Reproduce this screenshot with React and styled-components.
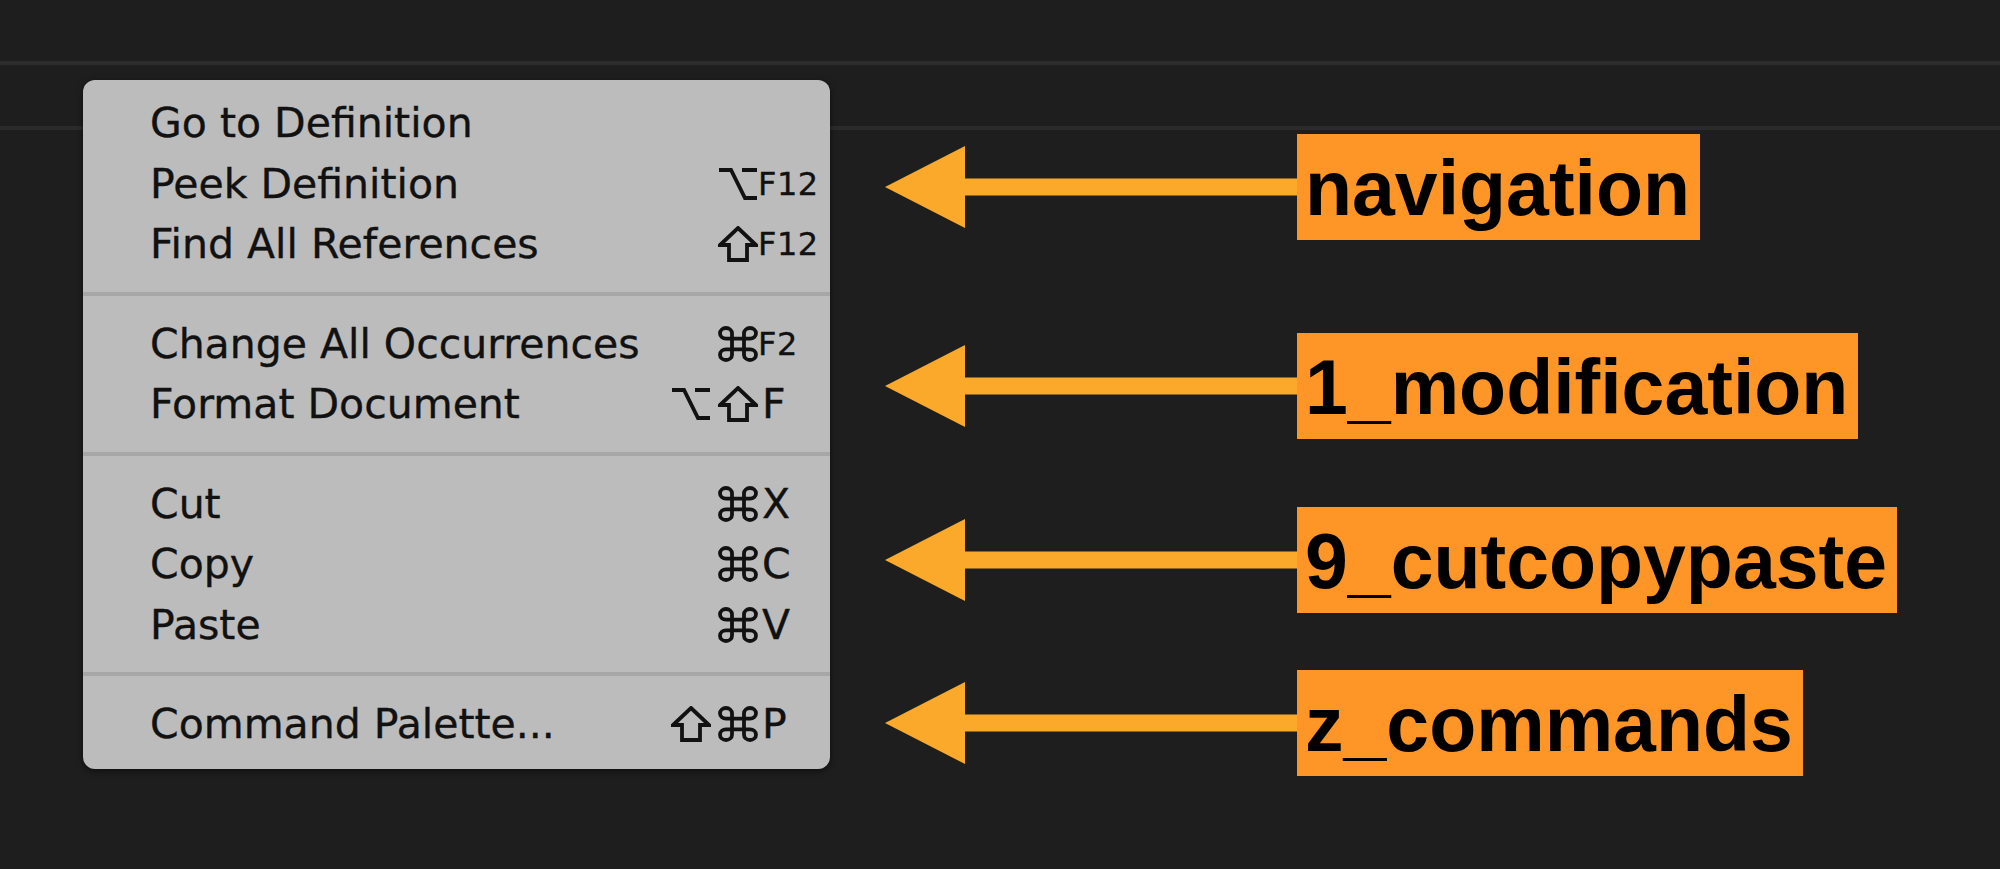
import React from 'react';
import styled, { createGlobalStyle } from 'styled-components';

const GlobalStyle = createGlobalStyle`
  html, body {
    margin: 0;
    padding: 0;
    background: #1e1e1e;
  }
  * {
    box-sizing: border-box;
  }
`;

const Screen = styled.div`
  position: relative;
  width: 2000px;
  height: 869px;
  overflow: hidden;
  background: #1e1e1e;
`;

const TitleBar = styled.div`
  height: 65px;
  border-bottom: 4px solid #2c2c2c;
`;

const TabBar = styled.div`
  height: 65px;
  border-bottom: 4px solid #2b2b2b;
`;

const Overlay = styled.div`
  position: absolute;
  top: 80px;
  left: 83px;
  display: flex;
  align-items: flex-start;
  gap: 55px;
`;

const Menu = styled.div`
  width: 747px;
  padding: 13px 0 14.5px;
  background: #bcbcbc;
  border-radius: 12px;
  box-shadow: 0 2px 6px rgba(0, 0, 0, 0.55);
  font-family: 'DejaVu Sans', 'Noto Sans', sans-serif;
  color: #111;
  -webkit-text-stroke: 0.35px #111;
`;

const Item = styled.div`
  display: grid;
  grid-template-columns: 1fr auto 72px;
  align-items: center;
  height: 60.5px;
  padding-left: 67px;
  font-size: 41px;
  line-height: 60.5px;
  white-space: nowrap;
`;

const Mods = styled.span`
  display: flex;
  align-items: center;
  gap: 7px;
  justify-content: flex-end;
`;

const Key = styled.span`
  padding-left: ${(p) => (p.$small ? '0' : '4px')};
  font-size: ${(p) => (p.$small ? '32px' : '41px')};
  letter-spacing: ${(p) => (p.$small ? '0.5px' : '0')};
`;

const Separator = styled.div`
  height: 4px;
  margin: 17px 0 18px;
  background: #a7a7a7;
`;

const Notes = styled.div`
  display: flex;
  flex-direction: column;
`;

const Note = styled.div`
  display: flex;
  align-items: center;
  margin-top: ${(p) => p.$offset}px;
`;

const Label = styled.div`
  height: 106px;
  padding: 0 10px 0 8px;
  background: #fd9527;
  color: #000;
  font-family: 'Liberation Sans', Arial, sans-serif;
  font-weight: 700;
  font-size: 77px;
  line-height: 108px;
  white-space: nowrap;
`;

const glyphs = {
  option: 'M1 4H13L27 32H39M24 4H39',
  shift: 'M20 2L38 19H29V34H11V19H2Z',
  command:
    'M26 7.33V28.67A6 5.33 0 1 0 32 23.33H8A6 5.33 0 1 0 14 28.67V7.33A6 5.33 0 1 0 8 12.67H32A6 5.33 0 1 0 26 7.33',
};

const Glyph = ({ kind }) => (
  <svg width="40" height="36" viewBox="0 0 40 36" fill="none">
    <path
      d={glyphs[kind]}
      stroke="#111"
      strokeWidth="3.8"
      strokeLinejoin="miter"
    />
  </svg>
);

const Arrow = () => (
  <svg width="412" height="82" viewBox="0 0 412 82">
    <polygon points="0,41 80,0 80,82" fill="#fba92b" />
    <rect x="78" y="32.5" width="334" height="17" fill="#fba92b" />
  </svg>
);

const groups = [
  [
    { label: 'Go to Definition' },
    { label: 'Peek Definition', mods: ['option'], key: 'F12', small: true },
    { label: 'Find All References', mods: ['shift'], key: 'F12', small: true },
  ],
  [
    { label: 'Change All Occurrences', mods: ['command'], key: 'F2', small: true },
    { label: 'Format Document', mods: ['option', 'shift'], key: 'F' },
  ],
  [
    { label: 'Cut', mods: ['command'], key: 'X' },
    { label: 'Copy', mods: ['command'], key: 'C' },
    { label: 'Paste', mods: ['command'], key: 'V' },
  ],
  [{ label: 'Command Palette...', mods: ['shift', 'command'], key: 'P' }],
];

const notes = [
  { text: 'navigation', offset: 54 },
  { text: '1_modification', offset: 93 },
  { text: '9_cutcopypaste', offset: 68 },
  { text: 'z_commands', offset: 57 },
];

export default function App() {
  return (
    <>
      <GlobalStyle />
      <Screen>
        <TitleBar />
        <TabBar />
        <Overlay>
          <Menu>
            {groups.map((items, gi) => (
              <React.Fragment key={gi}>
                {gi > 0 && <Separator />}
                {items.map((it) => (
                  <Item key={it.label}>
                    <span>{it.label}</span>
                    <Mods>
                      {(it.mods || []).map((m) => (
                        <Glyph key={m} kind={m} />
                      ))}
                    </Mods>
                    <Key $small={it.small}>{it.key}</Key>
                  </Item>
                ))}
              </React.Fragment>
            ))}
          </Menu>
          <Notes>
            {notes.map((n) => (
              <Note key={n.text} $offset={n.offset}>
                <Arrow />
                <Label>{n.text}</Label>
              </Note>
            ))}
          </Notes>
        </Overlay>
      </Screen>
    </>
  );
}
